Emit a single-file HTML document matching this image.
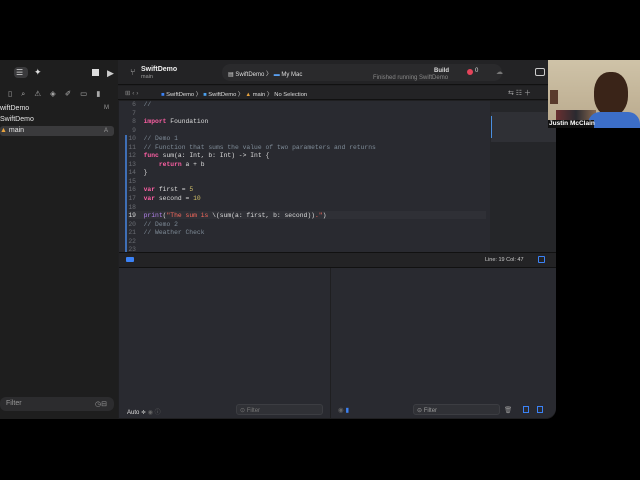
<!DOCTYPE html>
<html><head><style>
*{margin:0;padding:0;box-sizing:border-box}
body{width:640px;height:480px;background:#000;position:relative;overflow:hidden;font-family:"Liberation Sans",sans-serif;color:#ddd}
.a{position:absolute}
.code{font-family:"Liberation Mono",monospace;font-size:6.35px;color:#dcdcdc;white-space:pre}
.ln{color:#6a6d73;text-align:right;width:19px}
.k{color:#fc5fa3;font-weight:bold}.c{color:#7f8c98}.n{color:#d0bf69}.s{color:#fc6a5d}.p{color:#b281eb}
</style></head><body>
<div class="a" style="left:0;top:60px;width:556px;height:359px;background:#1f1f21;border-radius:0 0 10px 0"></div>
<!-- sidebar -->
<div class="a" style="left:0;top:60px;width:118px;height:359px;background:#1e1e1e"></div>
<div class="a" style="left:14px;top:67px;width:14px;height:11px;background:#3a3a3c;border-radius:4px"></div>
<div class="a" style="left:16px;top:68px;font-size:8px;color:#ddd">☰</div>
<div class="a" style="left:34px;top:67px;font-size:9px;color:#ddd">✦</div>
<div class="a" style="left:92px;top:69px;width:7px;height:7px;background:#ddd"></div>
<div class="a" style="left:107px;top:68px;font-size:9px;color:#ccc">▶</div>
<div class="a" style="left:8px;top:89px;font-size:7.5px;color:#aaa;letter-spacing:9px">▯⌕⚠◈✐▭▮</div>
<div class="a" style="left:0;top:105px;font-size:7px;color:#e6e6e6">wiftDemo</div>
<div class="a" style="left:104px;top:105px;font-size:6px;color:#999">M</div>
<div class="a" style="left:0;top:116px;font-size:7px;color:#e6e6e6">SwiftDemo</div>
<div class="a" style="left:0;top:126px;width:114px;height:10px;background:#3a3a3c;border-radius:3px"></div>
<div class="a" style="left:0;top:127px;font-size:7px;color:#e6e6e6"><span style="color:#e8a33d">▲</span> main</div>
<div class="a" style="left:104px;top:128px;font-size:6px;color:#999">A</div>
<div class="a" style="left:0;top:397px;width:114px;height:14px;background:#2c2c2e;border-radius:6px"></div>
<div class="a" style="left:6px;top:400px;font-size:7px;color:#999">Filter</div>
<div class="a" style="left:95px;top:400px;font-size:7px;color:#999">◷⊟</div>
<!-- toolbar -->
<div class="a" style="left:118px;top:60px;width:438px;height:25px;background:#232325;border-bottom:1px solid #111"></div>
<div class="a" style="left:130px;top:67px;font-size:9px;color:#aaa">⑂</div>
<div class="a" style="left:141px;top:66px;font-size:7px;font-weight:bold;color:#eee">SwiftDemo</div>
<div class="a" style="left:141px;top:74px;font-size:5.5px;color:#999">main</div>
<div class="a" style="left:222px;top:64px;width:280px;height:17px;background:#2a2a2c;border-radius:8px"></div>
<div class="a" style="left:228px;top:69px;font-size:6px;color:#ddd">▤ SwiftDemo 〉 <span style="color:#5aa0f0">▬</span> My Mac</div>
<div class="a" style="left:434px;top:68px;font-size:6px;color:#ddd;font-weight:bold">Build</div>
<div class="a" style="left:373px;top:75px;font-size:6px;color:#888">Finished running SwiftDemo</div>
<div class="a" style="left:467px;top:69px;width:6px;height:6px;border-radius:50%;background:#e5445a"></div>
<div class="a" style="left:475px;top:68px;font-size:6px;color:#ddd">0</div>
<div class="a" style="left:496px;top:68px;font-size:7px;color:#777">☁</div>
<div class="a" style="left:535px;top:68px;width:10px;height:8px;border:1px solid #ccc;border-radius:2px"></div>
<!-- jump bar -->
<div class="a" style="left:118px;top:86px;width:438px;height:14px;background:#232325;border-bottom:1px solid #111"></div>
<div class="a" style="left:125px;top:89px;font-size:6.5px;color:#888">⊞ ‹ ›</div>
<div class="a" style="left:161px;top:89px;font-size:5.8px;color:#ddd"><span style="color:#3b82f6">■</span> SwiftDemo 〉 <span style="color:#4aa0ee">■</span> SwiftDemo 〉 <span style="color:#e8a33d">▲</span> main 〉 No Selection</div>
<div class="a" style="left:508px;top:88px;font-size:7px;color:#aaa">⇆ ☷ ＋</div>
<!-- editor -->
<div class="a" style="left:119px;top:101px;width:371px;height:151px;background:#292a30"></div>
<div class="a" style="left:490px;top:101px;width:66px;height:151px;background:#252629"></div>
<div class="a" style="left:491px;top:112px;width:65px;height:30px;background:#2f3035"></div>
<div class="a" style="left:491px;top:116px;width:1px;height:22px;background:#4a8fe0"></div>
<div class="a" style="left:125px;top:135px;width:2px;height:117px;background:#3f6fb6"></div>
<div class="a" style="left:128px;top:211px;width:358px;height:8px;background:#2f3036"></div>
<div class="a code" style="left:117px;top:101px;line-height:8.54px"><span class="ln" style="display:inline-block"> 6</span>  <span class="c">//</span>
<span class="ln" style="display:inline-block"> 7</span>
<span class="ln" style="display:inline-block"> 8</span>  <span class="k">import</span> Foundation
<span class="ln" style="display:inline-block"> 9</span>
<span class="ln" style="display:inline-block">10</span>  <span class="c">// Demo 1</span>
<span class="ln" style="display:inline-block">11</span>  <span class="c">// Function that sums the value of two parameters and returns</span>
<span class="ln" style="display:inline-block">12</span>  <span class="k">func</span> sum(a: Int, b: Int) -&gt; Int {
<span class="ln" style="display:inline-block">13</span>      <span class="k">return</span> a + b
<span class="ln" style="display:inline-block">14</span>  }
<span class="ln" style="display:inline-block">15</span>
<span class="ln" style="display:inline-block">16</span>  <span class="k">var</span> first = <span class="n">5</span>
<span class="ln" style="display:inline-block">17</span>  <span class="k">var</span> second = <span class="n">10</span>
<span class="ln" style="display:inline-block">18</span>
<span class="ln" style="display:inline-block;color:#ddd">19</span>  <span class="p">print</span>(<span class="s">"The sum is </span>\(sum(a: first, b: second))<span class="s">."</span>)
<span class="ln" style="display:inline-block">20</span>  <span class="c">// Demo 2</span>
<span class="ln" style="display:inline-block">21</span>  <span class="c">// Weather Check</span>
<span class="ln" style="display:inline-block">22</span>
<span class="ln" style="display:inline-block">23</span></div>
<!-- debug bar -->
<div class="a" style="left:119px;top:252px;width:437px;height:16px;background:#232325;border-top:1px solid #111;border-bottom:1px solid #111"></div>
<div class="a" style="left:126px;top:257px;width:8px;height:5px;background:#3b82f6;border-radius:1px"></div>
<div class="a" style="left:485px;top:257px;font-size:5.5px;color:#ccc">Line: 19  Col: 47</div>
<div class="a" style="left:538px;top:256px;width:7px;height:7px;border:1px solid #3b82f6;border-radius:1px"></div>
<!-- bottom panes -->
<div class="a" style="left:119px;top:268px;width:211px;height:150px;background:#292a30"></div>
<div class="a" style="left:331px;top:268px;width:225px;height:150px;background:#292a30;border-radius:0 0 10px 0"></div>
<div class="a" style="left:127px;top:407px;font-size:6px;color:#ddd">Auto ≑ <span style="color:#666">  ◉ ⓘ</span></div>
<div class="a" style="left:236px;top:404px;width:87px;height:11px;background:#303136;border:1px solid #3c3d42;border-radius:3px;font-size:6px;color:#777;padding:2px 3px">⊙ Filter</div>
<div class="a" style="left:338px;top:406px;font-size:6.5px;color:#666">◉ <span style="color:#3b82f6">▮</span></div>
<div class="a" style="left:413px;top:404px;width:87px;height:11px;background:#303136;border:1px solid #3c3d42;border-radius:3px;font-size:6px;color:#999;padding:2px 3px">⊝ Filter</div>
<div class="a" style="left:504px;top:406px;font-size:6.5px;color:#999">🗑</div>
<div class="a" style="left:523px;top:406px;width:6px;height:7px;border:1px solid #3b82f6"></div>
<div class="a" style="left:537px;top:406px;width:6px;height:7px;border:1px solid #3b82f6"></div>
<!-- webcam -->
<div class="a" style="left:548px;top:60px;width:92px;height:68px;background:linear-gradient(180deg,#cfc3a8,#b9a98c);overflow:hidden">
 <div class="a" style="left:2px;top:30px;width:8px;height:14px;background:#5a3b2c"></div>
 <div class="a" style="left:8px;top:50px;width:40px;height:18px;background:linear-gradient(90deg,#6a3030,#2a2a30,#8a6a50)"></div>
 <div class="a" style="left:46px;top:12px;width:34px;height:44px;border-radius:45%;background:#3a2418"></div>
 <div class="a" style="left:40px;top:52px;width:52px;height:20px;border-radius:12px 12px 0 0;background:#3c6ec8"></div>
 <div class="a" style="left:0;top:60px;width:46px;height:8px;background:#111"></div>
 <div class="a" style="left:1px;top:60px;font-size:6.5px;color:#fff;font-weight:bold">Justin McClain</div>
</div>
</body></html>
